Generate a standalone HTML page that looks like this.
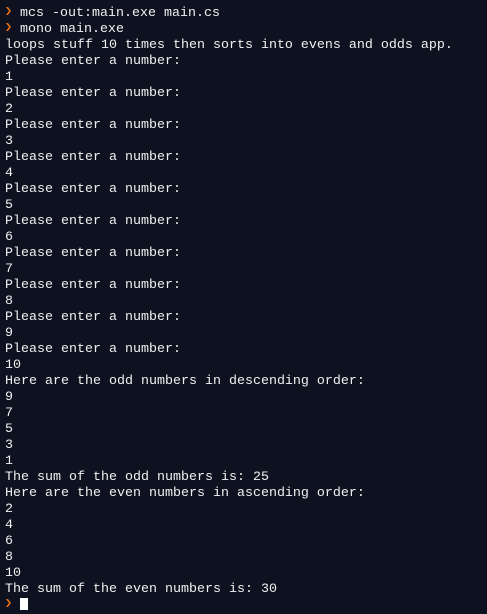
<!DOCTYPE html><html><head><style>
html,body{margin:0;padding:0;background:#0e1220;width:487px;height:603px;overflow:hidden}
pre{margin:0;position:absolute;left:5px;top:6px;font-family:"Liberation Mono",monospace;font-size:13.33px;line-height:16px;color:#f0f0f0;white-space:pre}
.a{display:inline-block;width:15px;position:relative}
.a::before{content:"";position:absolute;left:1px;top:-9px;width:5px;height:8px;background:linear-gradient(#e8700f,#e8700f);clip-path:polygon(0 0,40% 0,100% 50%,40% 100%,0 100%,60% 50%)}
.cur{display:inline-block;width:8px;height:12px;background:#fff;vertical-align:-2px}
</style></head><body><pre><span class="a"></span>mcs -out:main.exe main.cs
<span class="a"></span>mono main.exe
loops stuff 10 times then sorts into evens and odds app.
Please enter a number:
1
Please enter a number:
2
Please enter a number:
3
Please enter a number:
4
Please enter a number:
5
Please enter a number:
6
Please enter a number:
7
Please enter a number:
8
Please enter a number:
9
Please enter a number:
10
Here are the odd numbers in descending order:
9
7
5
3
1
The sum of the odd numbers is: 25
Here are the even numbers in ascending order:
2
4
6
8
10
The sum of the even numbers is: 30
<span class="a"></span><span class="cur"></span></pre></body></html>
